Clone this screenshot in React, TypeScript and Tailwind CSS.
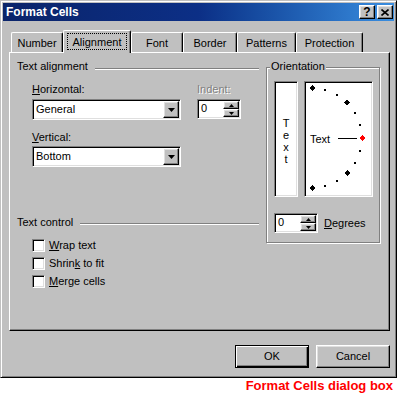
import React from "react";

const raised =
  "border border-t-white border-l-white border-r-black border-b-black shadow-[inset_-1px_-1px_0_0_#808080,inset_1px_1px_0_0_#dfdfdf] bg-[#c0c0c0]";
const sunken =
  "border border-t-[#808080] border-l-[#808080] border-r-white border-b-white shadow-[inset_1px_1px_0_0_#000,inset_-1px_-1px_0_0_#dfdfdf] bg-white";

const DownArrow = () => (
  <svg width="7" height="4" viewBox="0 0 7 4">
    <polygon points="0,0 7,0 3.5,4" fill="#000" />
  </svg>
);

const SpinBox = ({ value }: { value: string }) => (
  <div className={`${sunken} w-[44px] h-[20px] flex p-[1px]`}>
    <span className="flex-1 pl-[2px] pt-[1px]">{value}</span>
    <div className="flex flex-col w-[16px]">
      <div className={`${raised} h-[8px] flex items-center justify-center`}>
        <svg width="5" height="3" viewBox="0 0 5 3">
          <polygon points="2.5,0 5,3 0,3" fill="#000" />
        </svg>
      </div>
      <div className={`${raised} h-[8px] flex items-center justify-center`}>
        <svg width="5" height="3" viewBox="0 0 5 3">
          <polygon points="0,0 5,0 2.5,3" fill="#000" />
        </svg>
      </div>
    </div>
  </div>
);

const Combo = ({ value }: { value: string }) => (
  <div className={`${sunken} w-[149px] h-[21px] flex items-center p-[1px]`}>
    <span className="flex-1 pl-[2px]">{value}</span>
    <div className={`${raised} w-[16px] h-[17px] flex items-center justify-center`}>
      <DownArrow />
    </div>
  </div>
);

const CheckRow = ({ children }: { children: React.ReactNode }) => (
  <div className="flex items-center h-[13px] gap-[4px]">
    <div className={`${sunken} w-[13px] h-[13px]`} />
    <span>{children}</span>
  </div>
);

const tabs = [
  { label: "Number", w: "w-[52px]" },
  { label: "Alignment", w: "w-[68px]", active: true },
  { label: "Font", w: "w-[52px]" },
  { label: "Border", w: "w-[54px]" },
  { label: "Patterns", w: "w-[59px]" },
  { label: "Protection", w: "w-[67px]" },
];

// points on the orientation half circle, box-inner coordinates
const marks = [90, 75, 60, 45, 30, 15, 0, -15, -30, -45, -60, -75, -90].map((a) => {
  const r = (a * Math.PI) / 180;
  return { a, x: 6 + 50 * Math.cos(r), y: 55 - 50 * Math.sin(r) };
});

export default function App() {
  return (
    <div className="w-[399px] h-[395px] bg-white font-['Liberation_Sans',Arial,sans-serif] text-[11px] leading-[13px] text-black">
      <div className="w-[397px] h-[378px] bg-[#c0c0c0] border border-t-[#c0c0c0] border-l-[#c0c0c0] border-r-black border-b-black shadow-[inset_1px_1px_0_0_#fff,inset_-1px_-1px_0_0_#808080] p-[2px]">
        {/* title bar */}
        <div className="h-[18px] flex items-center bg-linear-to-r from-[#0a246a] via-[#0c2f86] to-[#3a8ee0] pl-[3px] pr-[1px]">
          <span className="flex-1 text-white font-bold text-[12px]">Format Cells</span>
          <div className="flex gap-[2px]">
            <div className={`${raised} w-[16px] h-[14px] flex items-center justify-center font-bold text-[12px] leading-[12px]`}>
              ?
            </div>
            <div className={`${raised} w-[16px] h-[14px] flex items-center justify-center`}>
              <svg width="8" height="7" viewBox="0 0 8 7">
                <path d="M0.5 0.5 L7.5 6.5 M7.5 0.5 L0.5 6.5" stroke="#000" strokeWidth="1.6" />
              </svg>
            </div>
          </div>
        </div>

        {/* tabs */}
        <div className="mt-[9px] ml-[8px] flex items-end h-[22px]">
          {tabs.map((t) =>
            t.active ? (
              <div
                key={t.label}
                className={`${t.w} h-[23px] -mb-[1px] relative z-10 bg-[#c0c0c0] border-t border-l border-t-white border-l-white border-r border-r-black shadow-[inset_-1px_0_0_0_#808080] rounded-tl-[2px] rounded-tr-[2px] flex flex-col items-center pt-[2px]`}
              >
                <span className="border border-dotted border-black px-[5px] pt-[2px] h-[17px]">{t.label}</span>
              </div>
            ) : (
              <div
                key={t.label}
                className={`${t.w} h-[20px] border-t border-l border-t-white border-l-white border-r border-r-black shadow-[inset_-1px_0_0_0_#808080] rounded-tl-[2px] rounded-tr-[2px] flex justify-center pt-[4px]`}
              >
                {t.label}
              </div>
            )
          )}
        </div>

        {/* panel */}
        <div className="ml-[6px] w-[381px] h-[279px] border border-t-white border-l-white border-r-black border-b-black shadow-[inset_-1px_-1px_0_0_#808080] flex">
          <div className="ml-[7px] pt-[7px] w-[242px]">
            <div className="flex items-start gap-[7px]">
              <span>Text alignment</span>
              <div className="flex-1 mt-[8px] h-[2px] border-t border-t-[#808080] border-b border-b-white" />
            </div>
            <div className="mt-[10px] pl-[15px] flex">
              <div className="w-[149px]">
                <div>
                  <u>H</u>orizontal:
                </div>
                <div className="mt-[3px]">
                  <Combo value="General" />
                </div>
              </div>
              <div className="ml-[16px]">
                <div className="text-[#808080] [text-shadow:1px_1px_0_#fff]">Indent:</div>
                <div className="mt-[3px]">
                  <SpinBox value="0" />
                </div>
              </div>
            </div>
            <div className="mt-[11px] pl-[15px]">
              <div>
                <u>V</u>ertical:
              </div>
              <div className="mt-[2px]">
                <Combo value="Bottom" />
              </div>
            </div>
            <div className="mt-[49px] flex items-start gap-[7px]">
              <span>Text control</span>
              <div className="flex-1 mt-[7px] h-[2px] border-t border-t-[#808080] border-b border-b-white" />
            </div>
            <div className="mt-[10px] pl-[15px] flex flex-col gap-[5px]">
              <CheckRow>
                <u>W</u>rap text
              </CheckRow>
              <CheckRow>
                Shrin<u>k</u> to fit
              </CheckRow>
              <CheckRow>
                <u>M</u>erge cells
              </CheckRow>
            </div>
          </div>

          {/* orientation group */}
          <div className="ml-[7px] mt-[14px] w-[114px] h-[176px] relative border border-[#808080] shadow-[1px_1px_0_0_#fff,inset_1px_1px_0_0_#fff] pl-[7px] pt-[13px]">
            <span className="absolute -top-[8px] left-[3px] px-[1px] bg-[#c0c0c0]">Orientation</span>
            <div className="flex gap-[6px]">
              <div className={`${sunken} w-[24px] h-[116px] flex flex-col items-center justify-center pt-[4px] leading-[12px]`}>
                <span>T</span>
                <span>e</span>
                <span>x</span>
                <span>t</span>
              </div>
              <div className={`${sunken} w-[69px] h-[116px] p-[1px]`}>
                <svg width="65" height="112" viewBox="0 0 65 112" shapeRendering="crispEdges">
                  {marks.map((m) =>
                    m.a % 45 === 0 ? (
                      <polygon
                        key={m.a}
                        points={`${m.x},${m.y - 3} ${m.x + 3},${m.y} ${m.x},${m.y + 3} ${m.x - 3},${m.y}`}
                        fill={m.a === 0 ? "#ff0000" : "#000"}
                      />
                    ) : (
                      <rect key={m.a} x={Math.round(m.x) - 1} y={Math.round(m.y) - 1} width="2" height="2" fill="#000" />
                    )
                  )}
                  <rect x="32" y="55" width="19" height="1" fill="#000" />
                  <text x="4" y="60" fontFamily="Liberation Sans, Arial, sans-serif" fontSize="11" fill="#000">
                    Text
                  </text>
                </svg>
              </div>
            </div>
            <div className="mt-[16px] flex items-center">
              <SpinBox value="0" />
              <span className="ml-[6px]">
                <u>D</u>egrees
              </span>
            </div>
          </div>
        </div>

        {/* buttons */}
        <div className="mt-[14px] flex justify-end gap-[7px] pr-[4px]">
          <button className="w-[74px] h-[23px] border border-black shadow-[inset_1px_1px_0_0_#fff,inset_-1px_-1px_0_0_#000,inset_-2px_-2px_0_0_#808080] bg-[#c0c0c0]">
            OK
          </button>
          <button className={`${raised} w-[74px] h-[23px]`}>Cancel</button>
        </div>
      </div>
      <div className="flex justify-end pr-[6px]">
        <span className="text-[#ff0000] font-bold text-[13px] leading-[16px]">Format Cells dialog box</span>
      </div>
    </div>
  );
}
